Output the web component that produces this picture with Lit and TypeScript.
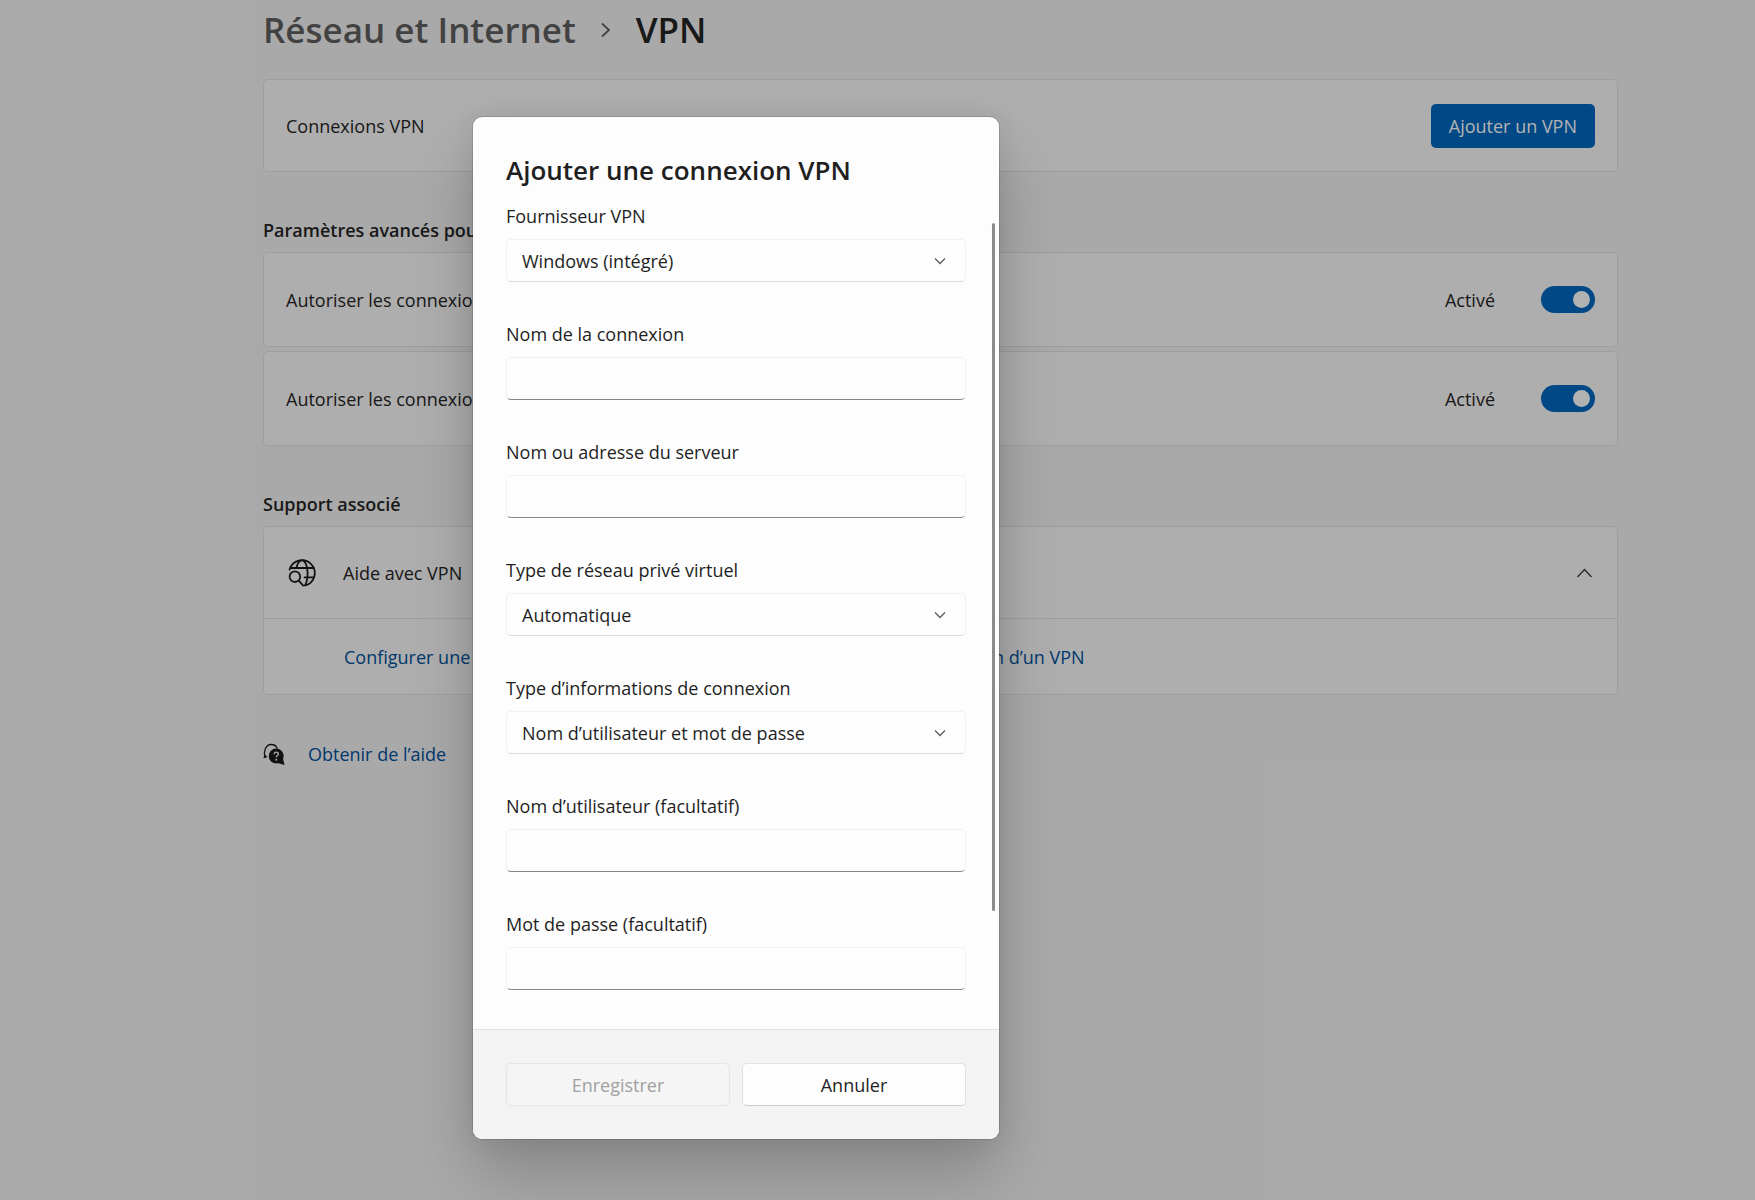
import { LitElement, html, css, svg } from "lit";
import { customElement, state } from "lit/decorators.js";

type Field = { id: string; label: string; kind: "select" | "text" | "password"; options?: string[] };

const FIELDS: Field[] = [
  { id: "provider", label: "Fournisseur VPN", kind: "select", options: ["Windows (intégré)"] },
  { id: "name", label: "Nom de la connexion", kind: "text" },
  { id: "server", label: "Nom ou adresse du serveur", kind: "text" },
  { id: "tunnel", label: "Type de réseau privé virtuel", kind: "select", options: ["Automatique"] },
  {
    id: "signin",
    label: "Type d’informations de connexion",
    kind: "select",
    options: ["Nom d’utilisateur et mot de passe"],
  },
  { id: "user", label: "Nom d’utilisateur (facultatif)", kind: "text" },
  { id: "password", label: "Mot de passe (facultatif)", kind: "password" },
];

const shared = css`
  * {
    box-sizing: border-box;
    margin: 0;
  }
  button,
  input,
  select {
    font: inherit;
    color: inherit;
  }
`;

@customElement("vpn-dialog")
export class VpnDialog extends LitElement {
  static styles = [
    shared,
    css`
      :host {
        display: block;
      }
      .dialog {
        position: relative;
        border-radius: 9px;
        background: #fdfdfd;
        color: #1f1f1f;
        box-shadow:
          0 0 0 1px rgba(0, 0, 0, 0.12),
          0 36px 64px rgba(0, 0, 0, 0.2),
          0 2px 24px rgba(0, 0, 0, 0.08);
      }
      .body {
        display: flex;
        flex-direction: column;
        padding: 35px 33px 39px;
      }
      .title {
        font-size: 26px;
        line-height: 36px;
        font-weight: 600;
        margin-bottom: 16px;
      }
      .fields {
        display: flex;
        flex-direction: column;
        gap: 40px;
      }
      .field {
        display: flex;
        flex-direction: column;
        gap: 11px;
      }
      .label {
        line-height: 24px;
      }
      .box {
        display: grid;
        align-items: center;
      }
      .box > * {
        grid-area: 1 / 1;
      }
      .input {
        appearance: none;
        width: 100%;
        height: 43px;
        padding: 0 15px;
        border: 1px solid #f0f0f0;
        border-bottom-color: #dcdcdc;
        border-radius: 5px;
        background: #fdfdfd;
        outline: none;
      }
      .entry {
        border-bottom-color: #868686;
      }
      .chevron {
        justify-self: end;
        margin-right: 20px;
        pointer-events: none;
      }
      .thumb {
        position: absolute;
        top: 106px;
        right: 4px;
        width: 3px;
        height: 688px;
        border-radius: 2px;
        background: #8c8c8c;
      }
      .footer {
        display: grid;
        grid-template-columns: 1fr 1fr;
        gap: 12px;
        padding: 33px;
        border-top: 1px solid #e4e4e4;
        border-radius: 0 0 9px 9px;
        background: #f3f3f3;
      }
      .button {
        height: 43px;
        border: 1px solid #e2e2e2;
        border-bottom-color: #cacaca;
        border-radius: 5px;
        background: #fdfdfd;
      }
      .button:disabled {
        border-color: #e4e4e4;
        background: #f5f5f5;
        color: #a0a0a0;
      }
    `,
  ];

  private control(field: Field) {
    if (field.kind !== "select") {
      return html`<input class="input entry" id=${field.id} type=${field.kind} />`;
    }
    return html`
      <select class="input" id=${field.id}>
        ${field.options?.map((option) => html`<option>${option}</option>`)}
      </select>
      <svg class="chevron" width="12" height="12" viewBox="0 0 12 12" aria-hidden="true">
        <path d="M1 3.5 6 8.5 11 3.5" fill="none" stroke="#5c5c5c" stroke-width="1.3" />
      </svg>
    `;
  }

  render() {
    return html`
      <form class="dialog" role="dialog" aria-labelledby="title">
        <div class="body">
          <h2 class="title" id="title">Ajouter une connexion VPN</h2>
          <div class="fields">
            ${FIELDS.map(
              (field) => html`
                <div class="field">
                  <label class="label" for=${field.id}>${field.label}</label>
                  <div class="box">${this.control(field)}</div>
                </div>
              `,
            )}
          </div>
        </div>
        <div class="thumb"></div>
        <div class="footer">
          <button class="button" type="submit" disabled>Enregistrer</button>
          <button class="button" type="button">Annuler</button>
        </div>
      </form>
    `;
  }
}

const globeSearch = svg`
  <g fill="none" stroke="#1b1b1b" stroke-width="1.8" stroke-linecap="round">
    <path d="M1.6 10.6A12.8 12.8 0 1 1 17.2 26.4" />
    <path d="M2.6 9H25.6M16.6 18.4H26" />
    <path d="M8.4 9C9.4 4.6 11.6 1.4 14 1.4C17.4 1.4 19.6 7.500 19.6 14C19.6 19.500 18.800 23.500 17 26.400" />
    <circle cx="6.9" cy="17.700" r="5.300" />
    <path d="M10.700 21.600 15.200 26.600" />
  </g>`;

const helpBubbles = svg`
  <path d="M1.900 14.300C0.400 8.500 2.500 1.600 8 1.500C11 1.400 13.300 3 14.300 5.400" fill="none" stroke="#1b1b1b" stroke-width="1.300" />
  <path d="M1.300 11 0.500 15.300 4.600 14.200Z" fill="#1b1b1b" />
  <circle cx="13.200" cy="13" r="7.500" fill="#1b1b1b" />
  <path d="M14.500 20 21.500 22 20 15.500Z" fill="#1b1b1b" />
  <path d="M11.200 11.200C11.200 8.300 15.400 8.500 15.300 11.100C15.200 12.700 13.300 12.700 13.300 14.300" fill="none" stroke="#f3f3f3" stroke-width="1.400" />
  <circle cx="13.300" cy="16.700" r="1" fill="#f3f3f3" />`;

@customElement("app-root")
export class AppRoot extends LitElement {
  @state() private advanced = [
    { id: "metered", label: "Autoriser les connexions VPN sur des réseaux limités", on: true },
    { id: "roaming", label: "Autoriser les connexions VPN en itinérance", on: true },
  ];

  static styles = [
    shared,
    css`
      :host {
        display: grid;
        min-height: 100vh;
        font-family: "Open Sans", "Noto Sans", sans-serif;
        font-size: 18px;
        line-height: 24px;
        color: #252525;
        background: #f3f3f3;
      }
      .page,
      .scrim {
        grid-area: 1 / 1;
      }
      .page {
        padding: 4px 137px 24px 263px;
      }
      .crumbs {
        display: flex;
        align-items: center;
        gap: 24px;
        margin-bottom: 23px;
        font-size: 35px;
        line-height: 52px;
        font-weight: 600;
      }
      .parent {
        color: #5f5f5f;
        text-decoration: none;
      }
      .card {
        border: 1px solid #e2e2e2;
        border-radius: 5px;
        background: #fafafa;
      }
      .row {
        display: flex;
        align-items: center;
        justify-content: space-between;
        padding: 0 22px;
        min-height: 93px;
      }
      .stack {
        display: flex;
        flex-direction: column;
        gap: 4px;
      }
      .tall {
        min-height: 95px;
      }
      .section {
        margin: 46px 0 10px;
        font-size: 18px;
        line-height: 24px;
        font-weight: 600;
      }
      .primary {
        height: 44px;
        padding: 0 18px;
        border: 0;
        border-radius: 5px;
        background: #0067c0;
        color: #fff;
      }
      .switch {
        display: flex;
        align-items: center;
        gap: 46px;
      }
      .toggle {
        appearance: none;
        display: flex;
        align-items: center;
        justify-content: flex-end;
        width: 54px;
        height: 27px;
        padding: 0 5px;
        border-radius: 14px;
        background: #0067c0;
      }
      .toggle::before {
        content: "";
        width: 17px;
        height: 17px;
        border-radius: 50%;
        background: #fff;
      }
      .expander {
        display: flex;
        align-items: center;
        gap: 27px;
        width: 100%;
        min-height: 92px;
        padding: 0 25px 0 24px;
        border: 0;
        border-bottom: 1px solid #e2e2e2;
        background: none;
        text-align: left;
      }
      .grow {
        flex: 1;
      }
      .links {
        display: flex;
        gap: 287px;
        align-items: center;
        min-height: 75px;
        padding: 0 80px;
      }
      .link {
        color: #00529c;
        text-decoration: none;
      }
      .help {
        display: flex;
        align-items: center;
        gap: 22px;
        margin-top: 47px;
      }
      .scrim {
        display: flex;
        justify-content: center;
        align-items: flex-start;
        padding: 117px 283px 61px 0;
        background: rgba(0, 0, 0, 0.3);
        z-index: 1;
      }
      .modal {
        flex: 0 1 526px;
      }
    `,
  ];

  private flip(id: string) {
    this.advanced = this.advanced.map((item) => (item.id === id ? { ...item, on: !item.on } : item));
  }

  render() {
    return html`
      <main class="page">
        <h1 class="crumbs">
          <a class="parent" href="#network">Réseau et Internet</a>
          <svg width="12" height="16" viewBox="0 0 12 16" aria-hidden="true">
            <path d="M2 1.500 9 8 2 14.500" fill="none" stroke="#5f5f5f" stroke-width="1.800" />
          </svg>
          <span>VPN</span>
        </h1>

        <section class="card row">
          <span>Connexions VPN</span>
          <button class="primary" type="button">Ajouter un VPN</button>
        </section>

        <h2 class="section">Paramètres avancés pour toutes les connexions VPN</h2>
        <div class="stack">
          ${this.advanced.map(
            (item) => html`
              <div class="card row tall">
                <label for=${item.id}>${item.label}</label>
                <div class="switch">
                  <span>${item.on ? "Activé" : "Désactivé"}</span>
                  <input
                    class="toggle"
                    id=${item.id}
                    type="checkbox"
                    role="switch"
                    .checked=${item.on}
                    @change=${() => this.flip(item.id)}
                  />
                </div>
              </div>
            `,
          )}
        </div>

        <h2 class="section">Support associé</h2>
        <section class="card">
          <button class="expander" type="button" aria-expanded="true">
            <svg width="28" height="28" viewBox="0 0 28 28" aria-hidden="true">${globeSearch}</svg>
            <span class="grow">Aide avec VPN</span>
            <svg width="15" height="10" viewBox="0 0 15 10" aria-hidden="true">
              <path d="M0.500 9 7.500 1.500 14.500 9" fill="none" stroke="#3a3a3a" stroke-width="1.300" />
            </svg>
          </button>
          <div class="links">
            <a class="link" href="#configure">Configurer une connexion VPN</a>
            <a class="link" href="#setup">Configuration d’un VPN</a>
          </div>
        </section>

        <div class="help">
          <svg width="23" height="23" viewBox="0 0 23 23" aria-hidden="true">${helpBubbles}</svg>
          <a class="link" href="#help">Obtenir de l’aide</a>
        </div>
      </main>
      <div class="scrim"><vpn-dialog class="modal"></vpn-dialog></div>
    `;
  }
}
